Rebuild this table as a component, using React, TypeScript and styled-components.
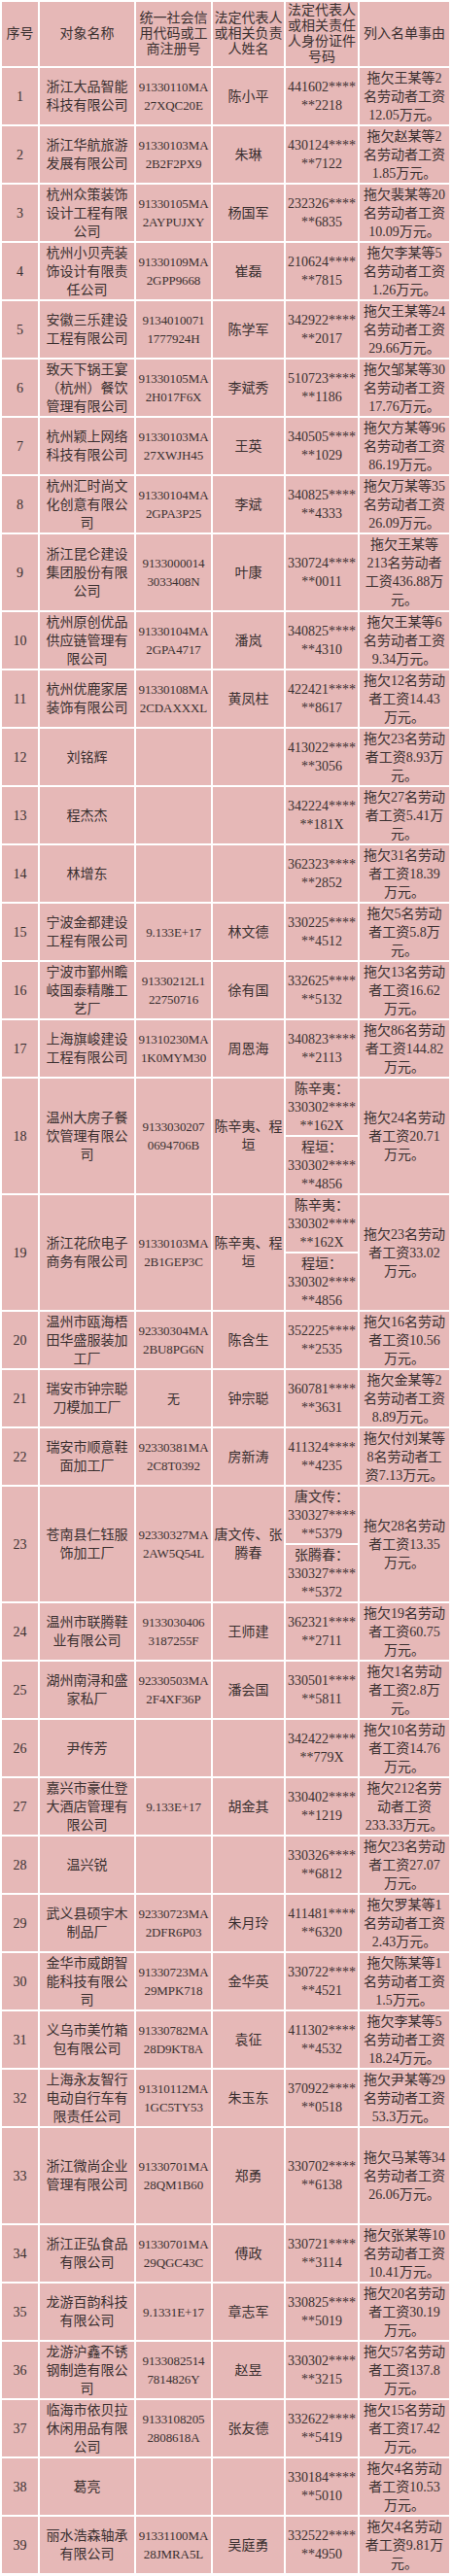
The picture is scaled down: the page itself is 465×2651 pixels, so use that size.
import React from 'react';
import styled, { createGlobalStyle } from 'styled-components';

const GlobalStyle = createGlobalStyle`
  html, body {
    margin: 0;
    padding: 0;
    background: #ffffff;
  }
`;

const Sheet = styled.table`
  width: 464px;
  table-layout: fixed;
  border-collapse: separate;
  border-spacing: 2px;
  background: #ffffff;
  font-family: "Liberation Serif", "Noto Sans CJK SC", serif;
  font-size: 14px;
  color: #3a3030;
`;

const Row = styled.tr<{ $h: number }>`
  height: ${(p) => p.$h}px;
`;

const HeadCell = styled.th`
  height: 66px;
  padding: 0;
  background: #e6b8b7;
  font-weight: normal;
  line-height: 16px;
  text-align: center;
  vertical-align: middle;
  white-space: pre;
`;

const Cell = styled.td`
  padding: 0;
  background: #e6b8b7;
  line-height: 19px;
  text-align: center;
  vertical-align: middle;
  white-space: pre;
`;

const CodeCell = styled(Cell)`
  font-size: 13px;
  letter-spacing: -0.1px;
`;

type Entry = {
  no: number;
  name: string;
  code?: string;
  person?: string;
  id: string | [string, string];
  reason: string;
  h?: number;
};

const rows: Entry[] = [
  { no: 1, name: '浙江大品智能\n科技有限公司', code: '91330110MA\n27XQC20E', person: '陈小平', id: '441602****\n**2218', reason: '拖欠王某等2\n名劳动者工资\n12.05万元。' },
  { no: 2, name: '浙江华航旅游\n发展有限公司', code: '91330103MA\n2B2F2PX9', person: '朱琳', id: '430124****\n**7122', reason: '拖欠赵某等2\n名劳动者工资\n1.85万元。' },
  { no: 3, name: '杭州众策装饰\n设计工程有限\n公司', code: '91330105MA\n2AYPUJXY', person: '杨国军', id: '232326****\n**6835', reason: '拖欠裴某等20\n名劳动者工资\n10.09万元。' },
  { no: 4, name: '杭州小贝壳装\n饰设计有限责\n任公司', code: '91330109MA\n2GPP9668', person: '崔磊', id: '210624****\n**7815', reason: '拖欠李某等5\n名劳动者工资\n1.26万元。' },
  { no: 5, name: '安徽三乐建设\n工程有限公司', code: '9134010071\n1777924H', person: '陈学军', id: '342922****\n**2017', reason: '拖欠王某等24\n名劳动者工资\n29.66万元。' },
  { no: 6, name: '致天下锅王宴\n（杭州）餐饮\n管理有限公司', code: '91330105MA\n2H017F6X', person: '李斌秀', id: '510723****\n**1186', reason: '拖欠邹某等30\n名劳动者工资\n17.76万元。' },
  { no: 7, name: '杭州颖上网络\n科技有限公司', code: '91330103MA\n27XWJH45', person: '王英', id: '340505****\n**1029', reason: '拖欠方某等96\n名劳动者工资\n86.19万元。' },
  { no: 8, name: '杭州汇时尚文\n化创意有限公\n司', code: '91330104MA\n2GPA3P25', person: '李斌', id: '340825****\n**4333', reason: '拖欠万某等35\n名劳动者工资\n26.09万元。' },
  { no: 9, name: '浙江昆仑建设\n集团股份有限\n公司', code: '9133000014\n3033408N', person: '叶康', id: '330724****\n**0011', reason: '拖欠王某等\n213名劳动者\n工资436.88万\n元。', h: 78 },
  { no: 10, name: '杭州原创优品\n供应链管理有\n限公司', code: '91330104MA\n2GPA4717', person: '潘岚', id: '340825****\n**4310', reason: '拖欠王某等6\n名劳动者工资\n9.34万元。' },
  { no: 11, name: '杭州优鹿家居\n装饰有限公司', code: '91330108MA\n2CDAXXXL', person: '黄凤柱', id: '422421****\n**8617', reason: '拖欠12名劳动\n者工资14.43\n万元。' },
  { no: 12, name: '刘铭辉', id: '413022****\n**3056', reason: '拖欠23名劳动\n者工资8.93万\n元。' },
  { no: 13, name: '程杰杰', id: '342224****\n**181X', reason: '拖欠27名劳动\n者工资5.41万\n元。' },
  { no: 14, name: '林增东', id: '362323****\n**2852', reason: '拖欠31名劳动\n者工资18.39\n万元。' },
  { no: 15, name: '宁波金都建设\n工程有限公司', code: '9.133E+17', person: '林文德', id: '330225****\n**4512', reason: '拖欠5名劳动\n者工资5.8万\n元。' },
  { no: 16, name: '宁波市鄞州瞻\n岐国泰精雕工\n艺厂', code: '91330212L1\n22750716', person: '徐有国', id: '332625****\n**5132', reason: '拖欠13名劳动\n者工资16.62\n万元。' },
  { no: 17, name: '上海旗峻建设\n工程有限公司', code: '91310230MA\n1K0MYM30', person: '周恩海', id: '340823****\n**2113', reason: '拖欠86名劳动\n者工资144.82\n万元。' },
  { no: 18, name: '温州大房子餐\n饮管理有限公\n司', code: '9133030207\n0694706B', person: '陈辛夷、程\n垣', id: ['陈辛夷：\n330302****\n**162X', '程垣：\n330302****\n**4856'], reason: '拖欠24名劳动\n者工资20.71\n万元。' },
  { no: 19, name: '浙江花欣电子\n商务有限公司', code: '91330103MA\n2B1GEP3C', person: '陈辛夷、程\n垣', id: ['陈辛夷：\n330302****\n**162X', '程垣：\n330302****\n**4856'], reason: '拖欠23名劳动\n者工资33.02\n万元。' },
  { no: 20, name: '温州市瓯海梧\n田华盛服装加\n工厂', code: '92330304MA\n2BU8PG6N', person: '陈含生', id: '352225****\n**2535', reason: '拖欠16名劳动\n者工资10.56\n万元。' },
  { no: 21, name: '瑞安市钟宗聪\n刀模加工厂', code: '无', person: '钟宗聪', id: '360781****\n**3631', reason: '拖欠金某等2\n名劳动者工资\n8.89万元。' },
  { no: 22, name: '瑞安市顺意鞋\n面加工厂', code: '92330381MA\n2C8T0392', person: '房新涛', id: '411324****\n**4235', reason: '拖欠付刘某等\n8名劳动者工\n资7.13万元。' },
  { no: 23, name: '苍南县仁钰服\n饰加工厂', code: '92330327MA\n2AW5Q54L', person: '唐文传、张\n腾春', id: ['唐文传：\n330327****\n**5379', '张腾春：\n330327****\n**5372'], reason: '拖欠28名劳动\n者工资13.35\n万元。' },
  { no: 24, name: '温州市联腾鞋\n业有限公司', code: '9133030406\n3187255F', person: '王师建', id: '362321****\n**2711', reason: '拖欠19名劳动\n者工资60.75\n万元。' },
  { no: 25, name: '湖州南浔和盛\n家私厂', code: '92330503MA\n2F4XF36P', person: '潘会国', id: '330501****\n**5811', reason: '拖欠1名劳动\n者工资2.8万\n元。' },
  { no: 26, name: '尹传芳', id: '342422****\n**779X', reason: '拖欠10名劳动\n者工资14.76\n万元。' },
  { no: 27, name: '嘉兴市豪仕登\n大酒店管理有\n限公司', code: '9.133E+17', person: '胡金其', id: '330402****\n**1219', reason: '拖欠212名劳\n动者工资\n233.33万元。' },
  { no: 28, name: '温兴锐', id: '330326****\n**6812', reason: '拖欠23名劳动\n者工资27.07\n万元。' },
  { no: 29, name: '武义县硕宇木\n制品厂', code: '92330723MA\n2DFR6P03', person: '朱月玲', id: '411481****\n**6320', reason: '拖欠罗某等1\n名劳动者工资\n2.43万元。' },
  { no: 30, name: '金华市威朗智\n能科技有限公\n司', code: '91330723MA\n29MPK718', person: '金华英', id: '330722****\n**4521', reason: '拖欠陈某等1\n名劳动者工资\n1.5万元。' },
  { no: 31, name: '义乌市美竹箱\n包有限公司', code: '91330782MA\n28D9KT8A', person: '袁征', id: '411302****\n**4532', reason: '拖欠李某等5\n名劳动者工资\n18.24万元。' },
  { no: 32, name: '上海永友智行\n电动自行车有\n限责任公司', code: '91310112MA\n1GC5TY53', person: '朱玉东', id: '370922****\n**0518', reason: '拖欠尹某等29\n名劳动者工资\n53.3万元。' },
  { no: 33, name: '浙江微尚企业\n管理有限公司', code: '91330701MA\n28QM1B60', person: '郑勇', id: '330702****\n**6138', reason: '拖欠马某等34\n名劳动者工资\n26.06万元。', h: 98 },
  { no: 34, name: '浙江正弘食品\n有限公司', code: '91330701MA\n29QGC43C', person: '傅政', id: '330721****\n**3114', reason: '拖欠张某等10\n名劳动者工资\n10.41万元。' },
  { no: 35, name: '龙游百韵科技\n有限公司', code: '9.1331E+17', person: '章志军', id: '330825****\n**5019', reason: '拖欠20名劳动\n者工资30.19\n万元。' },
  { no: 36, name: '龙游沪鑫不锈\n钢制造有限公\n司', code: '9133082514\n7814826Y', person: '赵昱', id: '330302****\n**3215', reason: '拖欠57名劳动\n者工资137.8\n万元。' },
  { no: 37, name: '临海市依贝拉\n休闲用品有限\n公司', code: '9133108205\n2808618A', person: '张友德', id: '332622****\n**5419', reason: '拖欠15名劳动\n者工资17.42\n万元。' },
  { no: 38, name: '葛亮', id: '330184****\n**5010', reason: '拖欠4名劳动\n者工资10.53\n万元。' },
  { no: 39, name: '丽水浩森轴承\n有限公司', code: '91331100MA\n28JMRA5L', person: '吴庭勇', id: '332522****\n**4950', reason: '拖欠4名劳动\n者工资9.81万\n元。' },
];

const headers = [
  '序号',
  '对象名称',
  '统一社会信\n用代码或工\n商注册号',
  '法定代表人\n或相关负责\n人姓名',
  '法定代表人\n或相关责任\n人身份证件\n号码',
  '列入名单事由',
];

const widths = [37, 97, 77, 73, 74, 92];

const App: React.FC = () => {
  return (
    <>
      <GlobalStyle />
      <Sheet>
        <colgroup>
          {widths.map((w, i) => (
            <col key={i} style={{ width: w }} />
          ))}
        </colgroup>
        <thead>
          <tr>
            {headers.map((h) => (
              <HeadCell key={h}>{h}</HeadCell>
            ))}
          </tr>
        </thead>
        <tbody>
          {rows.map((r) =>
            Array.isArray(r.id) ? (
              <React.Fragment key={r.no}>
                <Row $h={58}>
                  <Cell rowSpan={2}>{r.no}</Cell>
                  <Cell rowSpan={2}>{r.name}</Cell>
                  <CodeCell rowSpan={2}>{r.code}</CodeCell>
                  <Cell rowSpan={2}>{r.person}</Cell>
                  <Cell>{r.id[0]}</Cell>
                  <Cell rowSpan={2}>{r.reason}</Cell>
                </Row>
                <Row $h={58}>
                  <Cell>{r.id[1]}</Cell>
                </Row>
              </React.Fragment>
            ) : (
              <Row key={r.no} $h={r.h ?? 58}>
                <Cell>{r.no}</Cell>
                <Cell>{r.name}</Cell>
                <CodeCell>{r.code ?? ''}</CodeCell>
                <Cell>{r.person ?? ''}</Cell>
                <Cell>{r.id}</Cell>
                <Cell>{r.reason}</Cell>
              </Row>
            )
          )}
        </tbody>
      </Sheet>
    </>
  );
};

export default App;
